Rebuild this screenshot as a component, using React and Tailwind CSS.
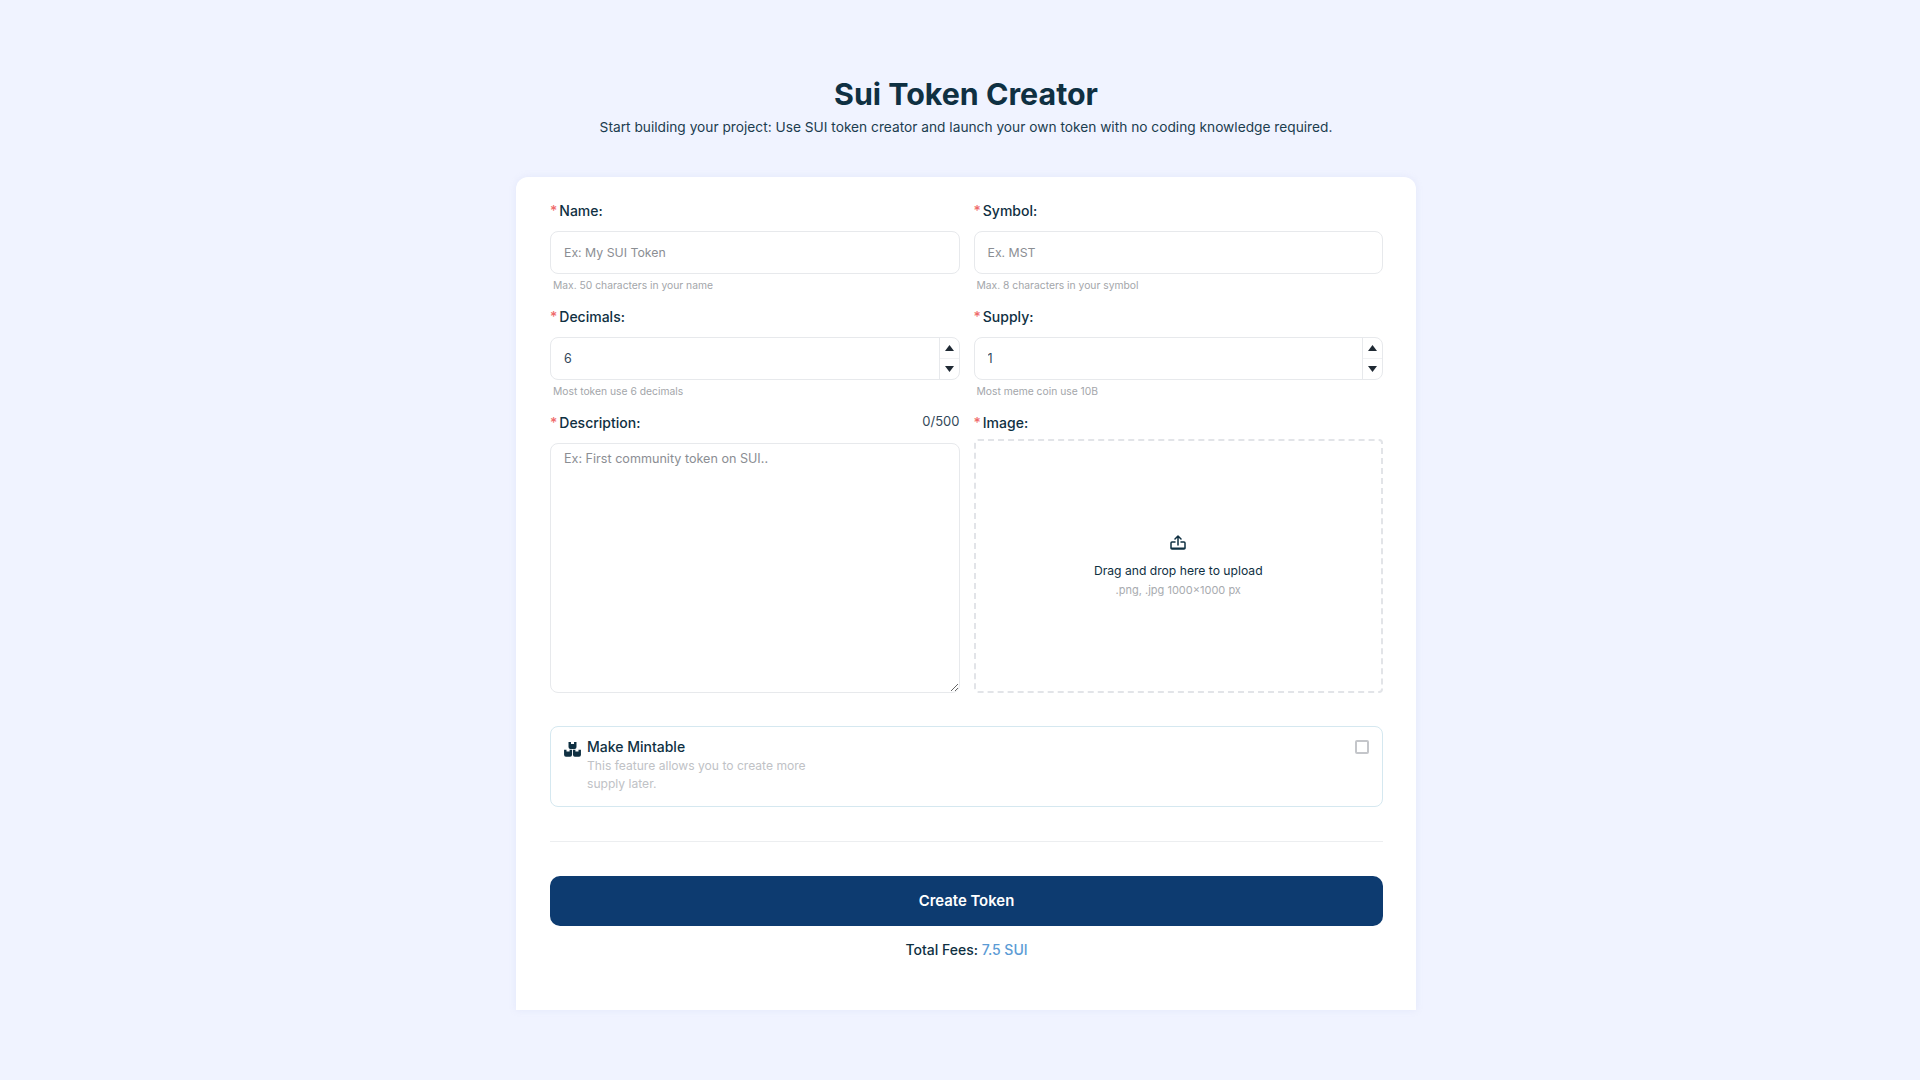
function Label({ children }) {
  return (
    <label className="flex h-5 items-center pb-[2px] text-[14px] font-medium text-[#0f3042]">
      <span className="mr-[2px] text-[#ef6b6b]">*</span>
      {children}
    </label>
  );
}

function Hint({ children }) {
  return <p className="mt-[3px] h-4 pl-[3px] text-[10.3px] leading-4 text-[#a3a6aa]">{children}</p>;
}

function TextField({ label, placeholder, hint }) {
  return (
    <div>
      <Label>{label}</Label>
      <input
        type="text"
        placeholder={placeholder}
        className="mt-[10px] block h-[43px] w-full rounded-lg border border-[#e7e9ec] bg-white px-[13px] text-[12.3px] text-[#0f3042] outline-none placeholder:text-[#8b8e93]"
      />
      <Hint>{hint}</Hint>
    </div>
  );
}

function NumberField({ label, value, hint }) {
  return (
    <div>
      <Label>{label}</Label>
      <div className="mt-[10px] flex h-[43px] overflow-hidden rounded-lg border border-[#e7e9ec] bg-white">
        <input
          type="text"
          defaultValue={value}
          className="min-w-0 flex-1 px-[13px] pt-[1px] text-[12.5px] text-[#33495a] outline-none"
        />
        <div className="flex w-5 flex-col border-l border-[#e7e9ec]">
          <button className="flex flex-1 items-center justify-center border-b border-[#f0f1f3]">
            <svg width="9" height="6" viewBox="0 0 9 6" className="fill-[#1f2933]">
              <path d="M4.5 0L9 6H0z" />
            </svg>
          </button>
          <button className="flex flex-1 items-center justify-center">
            <svg width="9" height="6" viewBox="0 0 9 6" className="fill-[#1f2933]">
              <path d="M0 0h9L4.5 6z" />
            </svg>
          </button>
        </div>
      </div>
      <Hint>{hint}</Hint>
    </div>
  );
}

const boxPath = "M0 0h2.6v2h3.3V0h2.6v5.4a2 2 0 0 1-2 2H2a2 2 0 0 1-2-2z";

function MintIcon() {
  return (
    <svg width="17" height="15" viewBox="0 0 18 16" className="mt-[5px] fill-[#0f3042]">
      <path d={boxPath} transform="translate(4.75 0)" />
      <path d={boxPath} transform="translate(0 8.2)" />
      <path d={boxPath} transform="translate(9.5 8.2)" />
    </svg>
  );
}

export default function App() {
  return (
    <div className="flex min-h-screen flex-col items-center bg-[#f0f3ff] pb-[70px] pl-3 pt-[76px] font-['Inter',sans-serif] text-[#0f3042]">
      <h1 className="text-[30.4px] font-bold leading-9">Sui Token Creator</h1>
      <p className="mt-[5px] text-[13.72px] leading-5 text-[#1c3d4f]">
        Start building your project: Use SUI token creator and launch your own token with no coding knowledge required.
      </p>

      <div className="mt-[40px] w-[900px] rounded-t-xl bg-white pb-[50px] pl-[34px] pr-[33px] pt-6 shadow-[0_0_6px_rgba(190,200,235,0.25)]">
        <div className="grid grid-cols-2 gap-x-[14px] gap-y-[14px]">
          <TextField label="Name:" placeholder="Ex: My SUI Token" hint="Max. 50 characters in your name" />
          <TextField label="Symbol:" placeholder="Ex. MST" hint="Max. 8 characters in your symbol" />
          <NumberField label="Decimals:" value="6" hint="Most token use 6 decimals" />
          <NumberField label="Supply:" value="1" hint="Most meme coin use 10B" />

          <div className="flex flex-col">
            <div className="flex items-center justify-between">
              <Label>Description:</Label>
              <span className="-mt-[3px] text-[13px] text-[#33495a]">0/500</span>
            </div>
            <textarea
              placeholder="Ex: First community token on SUI.."
              className="mt-[10px] block h-[250px] w-full rounded-lg border border-[#e7e9ec] bg-white px-[13px] py-[6px] text-[12.6px] outline-none placeholder:text-[#8b8e93]"
            />
          </div>

          <div className="flex flex-col">
            <Label>Image:</Label>
            <div className="mt-[6px] flex h-[254px] flex-col items-center justify-center rounded border-2 border-dashed border-[#e2e4e8]">
              <svg width="16" height="15" viewBox="0 0 16 15" fill="none" stroke="#0f3042" strokeWidth="1.5" strokeLinecap="round" strokeLinejoin="round">
                <path d="M8 10V1M5 4l3-3 3 3" />
                <path d="M5 7H2a1 1 0 0 0-1 1v5a1 1 0 0 0 1 1h12a1 1 0 0 0 1-1V8a1 1 0 0 0-1-1h-3" />
                <path d="M1.5 13.3h13" />
              </svg>
              <p className="mt-[11px] text-[12.15px] leading-5">Drag and drop here to upload</p>
              <p className="mt-[1px] text-[11px] leading-4 text-[#a8abaf]">.png, .jpg 1000x1000 px</p>
            </div>
          </div>
        </div>

        <div className="mt-[33px] flex h-[81px] items-start justify-between rounded-lg border border-[#d5e8f0] pl-[13px] pr-[13px] pt-[10px]">
          <div className="flex gap-[6px]">
            <MintIcon />
            <div>
              <p className="text-[14px] font-medium leading-5">Make Mintable</p>
              <p className="w-[240px] text-[12.1px] leading-[18px] text-[#c0c2c6]">
                This feature allows you to create more supply later.
              </p>
            </div>
          </div>
          <input type="checkbox" className="mt-[3px] h-[14px] w-[14px] appearance-none rounded-[2px] border-2 border-[#c4c6ca]" />
        </div>

        <div className="mt-[34px] h-px bg-[#eceef0]" />

        <button className="mt-[34px] block h-[50px] w-full rounded-[10px] bg-[#0d3b70] text-[14.9px] font-semibold text-white">
          Create Token
        </button>

        <p className="mt-[14px] text-center text-[14px] font-medium leading-5">
          Total Fees: <span className="text-[#5b9bd5]">7.5 SUI</span>
        </p>
      </div>
    </div>
  );
}
